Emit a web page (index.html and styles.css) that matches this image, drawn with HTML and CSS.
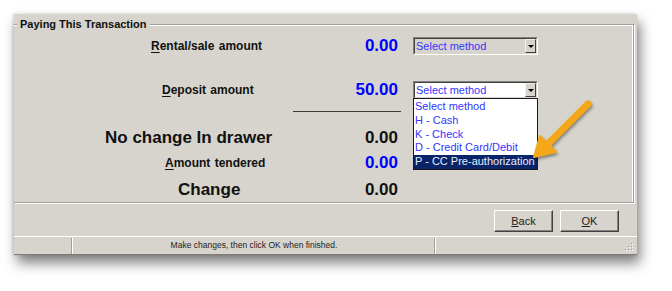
FILE: index.html
```html
<!DOCTYPE html>
<html>
<head>
<meta charset="utf-8">
<link rel="stylesheet" href="styles.css">
</head>
<body>
<div class="window">
  <fieldset class="group">
    <legend>Paying This Transaction</legend>
    <div class="row row-1">
      <div class="label small l-rental"><u>R</u>ental/sale amount</div>
      <div class="value blue">0.00</div>
      <div class="combo disabled">
        <span class="combo-text">Select method</span>
        <span class="combo-btn"><i></i></span>
      </div>
    </div>
    <div class="row row-2">
      <div class="label small l-deposit"><u>D</u>eposit amount</div>
      <div class="value blue">50.00</div>
      <div class="combo open">
        <span class="combo-text">Select method</span>
        <span class="combo-btn"><i></i></span>
        <ul class="list">
          <li>Select method</li>
          <li>H - Cash</li>
          <li>K - Check</li>
          <li>D - Credit Card/Debit</li>
          <li class="selected">P - CC Pre-authorization</li>
        </ul>
      </div>
    </div>
    <div class="rule-row"><div class="rule"></div></div>
    <div class="row row-3">
      <div class="label big l-nochange">No change In drawer</div>
      <div class="value">0.00</div>
    </div>
    <div class="row row-4">
      <div class="label small l-tendered"><u>A</u>mount tendered</div>
      <div class="value blue">0.00</div>
    </div>
    <div class="row row-5">
      <div class="label big l-change">Change</div>
      <div class="value">0.00</div>
    </div>
  </fieldset>
  <div class="buttons">
    <button class="btn"><u>B</u>ack</button>
    <button class="btn"><u>O</u>K</button>
  </div>
  <div class="status">
    <div class="panel p1"></div>
    <div class="panel p2">Make changes, then click OK when finished.</div>
    <div class="panel p3">
      <svg class="grip" width="10" height="10" viewBox="0 0 10 10">
        <rect x="7" y="1" width="1" height="1" fill="#9a9891"/>
        <rect x="4" y="4" width="1" height="1" fill="#9a9891"/>
        <rect x="7" y="4" width="1" height="1" fill="#9a9891"/>
        <rect x="1" y="7" width="1" height="1" fill="#9a9891"/>
        <rect x="4" y="7" width="1" height="1" fill="#9a9891"/>
        <rect x="7" y="7" width="1" height="1" fill="#9a9891"/>
        <rect x="8" y="2" width="1" height="1" fill="#fff"/>
        <rect x="5" y="5" width="1" height="1" fill="#fff"/>
        <rect x="8" y="5" width="1" height="1" fill="#fff"/>
        <rect x="2" y="8" width="1" height="1" fill="#fff"/>
        <rect x="5" y="8" width="1" height="1" fill="#fff"/>
        <rect x="8" y="8" width="1" height="1" fill="#fff"/>
      </svg>
    </div>
  </div>
</div>
<svg class="arrow" width="80" height="75" viewBox="0 0 80 75">
  <line x1="63" y1="9" x2="22" y2="50" stroke="#f5a817" stroke-width="7" stroke-linecap="round"/>
  <polygon points="15,41 31,57 9,62" fill="#f5a817" stroke="#f5a817" stroke-width="2" stroke-linejoin="round"/>
</svg>
</body>
</html>
```

FILE: styles.css
```css
html, body {
  margin: 0;
  padding: 0;
  background: #fff;
}
body {
  width: 672px;
  height: 291px;
  position: relative;
  overflow: hidden;
  font-family: "Liberation Sans", Arial, sans-serif;
}
.window {
  margin: 14px 0 0 14px;
  width: 623px;
  height: 241px;
  box-sizing: border-box;
  background: #d6d4cd;
  display: flex;
  flex-direction: column;
  padding-top: 4px;
  border-bottom: 1px solid #7e7d79;
  box-shadow: 3px 8px 12px rgba(0, 0, 0, 0.5), -1px 0 3px rgba(0, 0, 0, 0.15);
}
.group {
  margin: 0 3px 0 0;
  padding: 0;
  border: 1px solid #a19f99;
  border-left: none;
  box-shadow: inset -1px 1px 0 #fff, 1px 1px 0 #fff;
  min-width: 0;
}
.group legend {
  margin-left: 3px;
  padding: 0 3px;
  font-size: 11px;
  line-height: 13px;
  font-weight: bold;
  color: #111;
  background: #d6d4cd;
}
.row {
  display: flex;
  align-items: center;
}
.row-1 { height: 30px; }
.row-2 { height: 30px; margin-top: 14px; }
.row-3 { height: 24px; margin-top: 14px; }
.row-4 { height: 24px; margin-top: 1px; }
.row-5 { height: 25px; margin-top: 2px; }
.label {
  width: 279px;
  box-sizing: border-box;
  font-weight: bold;
  color: #111;
  white-space: nowrap;
}
.label.small { font-size: 12px; word-spacing: 1px; }
.label.big { font-size: 17px; }
.label u { text-decoration-thickness: 1px; text-underline-offset: 2px; }
.l-rental { padding-left: 137px; }
.l-deposit { padding-left: 148px; }
.l-nochange { padding-left: 91px; }
.l-tendered { padding-left: 151px; }
.l-change { padding-left: 164px; }
.value {
  width: 105px;
  text-align: right;
  font-size: 17px;
  font-weight: bold;
  color: #111;
}
.value.blue { color: #0000ff; }
.rule-row {
  padding-top: 6px;
}
.rule {
  margin-left: 279px;
  width: 108px;
  border-top: 1px solid #3c3c3c;
}
.combo {
  margin-left: 15px;
  width: 125px;
  height: 18px;
  box-sizing: border-box;
  border-style: solid;
  border-width: 1px;
  border-color: #858380 #fff #fff #858380;
  display: flex;
  position: relative;
}
.combo::before {
  content: "";
  position: absolute;
  inset: 0;
  border-style: solid;
  border-width: 1px;
  border-color: #404040 #d6d4cd #d6d4cd #404040;
  pointer-events: none;
}
.combo.disabled { background: #d6d4cd; }
.combo.open { background: #fff; }
.combo-text {
  flex: 1;
  padding-left: 2px;
  font-size: 11px;
  line-height: 16px;
  color: #3535ff;
}
.combo-btn {
  width: 11px;
  margin: 1px 1px 1px 0;
  box-sizing: border-box;
  background: #d6d4cd;
  border-style: solid;
  border-width: 1px;
  border-color: #f2f1ed #404040 #404040 #f2f1ed;
  display: flex;
  align-items: center;
  justify-content: center;
}
.combo-btn i {
  display: block;
  width: 0;
  height: 0;
  border-left: 3px solid transparent;
  border-right: 3px solid transparent;
  border-top: 3px solid #000;
}
.list {
  position: absolute;
  top: 100%;
  left: -1px;
  width: 125px;
  margin: 0;
  padding: 1px 0 0;
  list-style: none;
  background: #fff;
  border: 1px solid #1a1a1a;
  box-sizing: border-box;
  z-index: 2;
}
.list li {
  font-size: 11px;
  line-height: 13.75px;
  padding-left: 1px;
  color: #3535ff;
  white-space: nowrap;
}
.list li.selected {
  background: #0a246a;
  color: #e8ecff;
}
.buttons {
  display: flex;
  justify-content: flex-end;
  gap: 7px;
  margin-top: 7px;
  padding-right: 18px;
}
.btn {
  width: 59px;
  height: 22px;
  padding: 0;
  margin: 0;
  font-family: "Liberation Sans", Arial, sans-serif;
  font-size: 11px;
  color: #222;
  background: #d6d4cd;
  border-style: solid;
  border-width: 1px;
  border-color: #fff #404040 #404040 #fff;
  box-shadow: inset -1px -1px 0 #858380;
}
.status {
  margin-top: auto;
  height: 18px;
  display: flex;
  border-top: 1px solid #fff;
  box-sizing: border-box;
}
.panel {
  box-sizing: border-box;
  font-size: 8.5px;
  line-height: 15px;
  color: #222;
  border-right: 1px solid #fff;
  box-shadow: inset -1px 0 0 #a19f99;
  margin-top: 1px;
}
.p1 { width: 58px; box-shadow: none; border-right: 1px solid #a19f99; }
.p2 { width: 364px; text-align: center; border-left: 1px solid #fff; }
.p3 { flex: 1; border-right: none; box-shadow: none; display: flex; justify-content: flex-end; align-items: flex-end; padding: 0 3px 2px 0; }
.grip { display: block; }
.arrow {
  position: absolute;
  left: 525px;
  top: 95px;
  filter: drop-shadow(1px 2px 1.5px rgba(0, 0, 0, 0.4));
  z-index: 3;
}
```
